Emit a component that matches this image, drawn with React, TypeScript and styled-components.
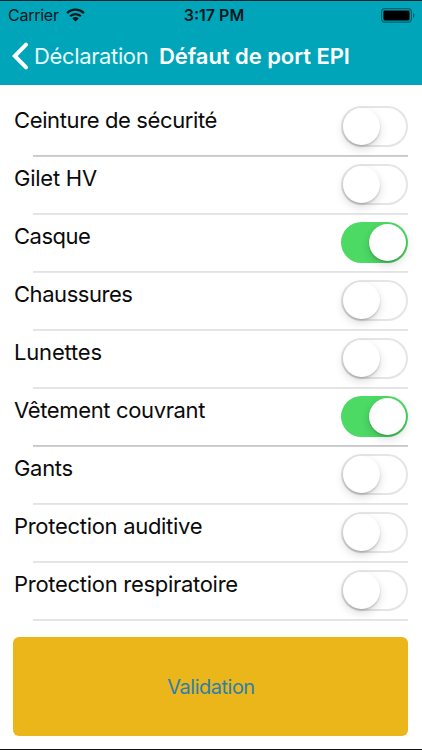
import React, { useState } from 'react';
import styled, { createGlobalStyle } from 'styled-components';

const Global = createGlobalStyle`
  body { margin: 0; background: #fff; }
  *, *::before, *::after { box-sizing: border-box; }
`;

const Screen = styled.div`
  width: 422px;
  height: 750px;
  display: flex;
  flex-direction: column;
  overflow: hidden;
  background: #fff;
  border-top: 1px solid #11242c;
  border-bottom: 1px solid #111;
  font-family: Inter, "Liberation Sans", sans-serif;
  color: #0b0b0b;
`;

const Header = styled.header`
  height: 84px;
  flex: none;
  background: #00a5b9;
`;

const StatusBar = styled.div`
  height: 28px;
  display: grid;
  grid-template-columns: 1fr auto 1fr;
  align-items: center;
  padding: 0 7px 0 8px;
  font-size: 16px;
  line-height: 28px;
  color: #06181c;
`;

const Carrier = styled.div`
  display: flex;
  align-items: center;
  gap: 7px;
  letter-spacing: -0.25px;
`;

const Clock = styled.div`
  padding-left: 5px;
  font-weight: 600;
  letter-spacing: 0;
`;

const BatteryIcon = styled.svg`
  justify-self: end;
  display: block;
`;

const NavBar = styled.nav`
  height: 54px;
  display: flex;
  align-items: center;
  padding-left: 11px;
  color: #fff;
  font-size: 22px;
  line-height: 54px;
  white-space: nowrap;
`;

const BackButton = styled.button`
  display: flex;
  align-items: center;
  gap: 5px;
  width: 148px;
  padding: 0;
  border: 0;
  background: none;
  color: #e6fafc;
  font: inherit;
  letter-spacing: -0.36px;
`;

const Title = styled.h1`
  margin: 0;
  font-size: 22px;
  font-weight: 600;
  letter-spacing: -0.06px;
`;

const List = styled.ul`
  list-style: none;
  margin: 0;
  padding: 14px 14px 0 13px;
`;

const Row = styled.li<{ $strong: boolean }>`
  height: 58px;
  display: flex;
  justify-content: space-between;
  background: linear-gradient(${p => (p.$strong ? '#c4c4c6, #d4d4d6' : '#e2e2e4, #e8e8ea')}) 20px 100% / 100% 2px no-repeat;
`;

const Label = styled.span<{ $spacing: number }>`
  padding-left: 1px;
  font-size: 22px;
  line-height: 42px;
  letter-spacing: ${p => p.$spacing}px;
  white-space: nowrap;
`;

const Track = styled.button<{ $on: boolean }>`
  width: 67px;
  height: 41px;
  margin-top: 7px;
  padding: ${p => (p.$on ? '2px' : '0')};
  display: flex;
  align-items: center;
  justify-content: ${p => (p.$on ? 'flex-end' : 'flex-start')};
  border: ${p => (p.$on ? '0' : '2px solid #e5e5e6')};
  border-radius: 21px;
  background: ${p => (p.$on ? '#4cd964' : '#fff')};
`;

const Knob = styled.span`
  width: 37px;
  height: 37px;
  border-radius: 50%;
  background: #fff;
  box-shadow: 0 4px 10px rgba(0, 0, 0, 0.14), 0 1.5px 2px rgba(0, 0, 0, 0.18);
`;

const ValidateButton = styled.button`
  height: 99px;
  flex: none;
  margin: 16px 14px 0 13px;
  padding: 0 0 0 1px;
  border: 0;
  border-radius: 6px;
  background: #eab61a;
  color: #2d7fae;
  font: 400 20px/101px Inter, "Liberation Sans", sans-serif;
  letter-spacing: -0.5px;
`;

type Item = { label: string; on: boolean; strong: boolean; spacing: number };

const initialItems: Item[] = [
  { label: 'Ceinture de sécurité', on: false, strong: true, spacing: -0.38 },
  { label: 'Gilet HV', on: false, strong: false, spacing: -0.25 },
  { label: 'Casque', on: true, strong: false, spacing: -0.5 },
  { label: 'Chaussures', on: false, strong: false, spacing: -0.45 },
  { label: 'Lunettes', on: false, strong: false, spacing: -0.18 },
  { label: 'Vêtement couvrant', on: true, strong: true, spacing: -0.36 },
  { label: 'Gants', on: false, strong: false, spacing: -0.3 },
  { label: 'Protection auditive', on: false, strong: false, spacing: -0.3 },
  { label: 'Protection respiratoire', on: false, strong: false, spacing: -0.29 },
];

export default function App() {
  const [items, setItems] = useState(initialItems);
  const toggle = (index: number) =>
    setItems(items.map((item, i) => (i === index ? { ...item, on: !item.on } : item)));

  return (
    <Screen>
      <Global />
      <Header>
        <StatusBar>
          <Carrier>
            Carrier
            <svg width="19" height="14" viewBox="0 0 19 14" fill="none" stroke="#06181c">
              <path d="M1.1 5.1a12 12 0 0 1 16.8 0" strokeWidth="2.3" />
              <path d="M4.1 8.3a7.7 7.7 0 0 1 10.8 0" strokeWidth="2.3" />
              <path d="M9.5 13.4 6.3 10.4a4.6 4.6 0 0 1 6.4 0Z" fill="#06181c" stroke="none" />
            </svg>
          </Carrier>
          <Clock>3:17 PM</Clock>
          <BatteryIcon width="34" height="15" viewBox="0 0 34 15">
            <rect x="0.6" y="0.6" width="29.8" height="13.6" rx="3.4" fill="none" stroke="#04616d" strokeWidth="1.2" />
            <rect x="2.4" y="2.4" width="26.2" height="10" rx="1.4" fill="#000" />
            <path d="M32 5.1c2 .6 2 4.2 0 4.8z" fill="#04616d" />
          </BatteryIcon>
        </StatusBar>
        <NavBar>
          <BackButton>
            <svg width="18" height="28" viewBox="0 0 18 28" fill="none" stroke="#fff" strokeWidth="4" strokeLinecap="round" strokeLinejoin="miter">
              <path d="M15 2.7 3.8 14 15 25.3" />
            </svg>
            Déclaration
          </BackButton>
          <Title>Défaut de port EPI</Title>
        </NavBar>
      </Header>
      <List>
        {items.map((item, i) => (
          <Row key={item.label} $strong={item.strong}>
            <Label $spacing={item.spacing}>{item.label}</Label>
            <Track
              $on={item.on}
              role="switch"
              aria-checked={item.on}
              aria-label={item.label}
              onClick={() => toggle(i)}
            >
              <Knob />
            </Track>
          </Row>
        ))}
      </List>
      <ValidateButton>Validation</ValidateButton>
    </Screen>
  );
}
